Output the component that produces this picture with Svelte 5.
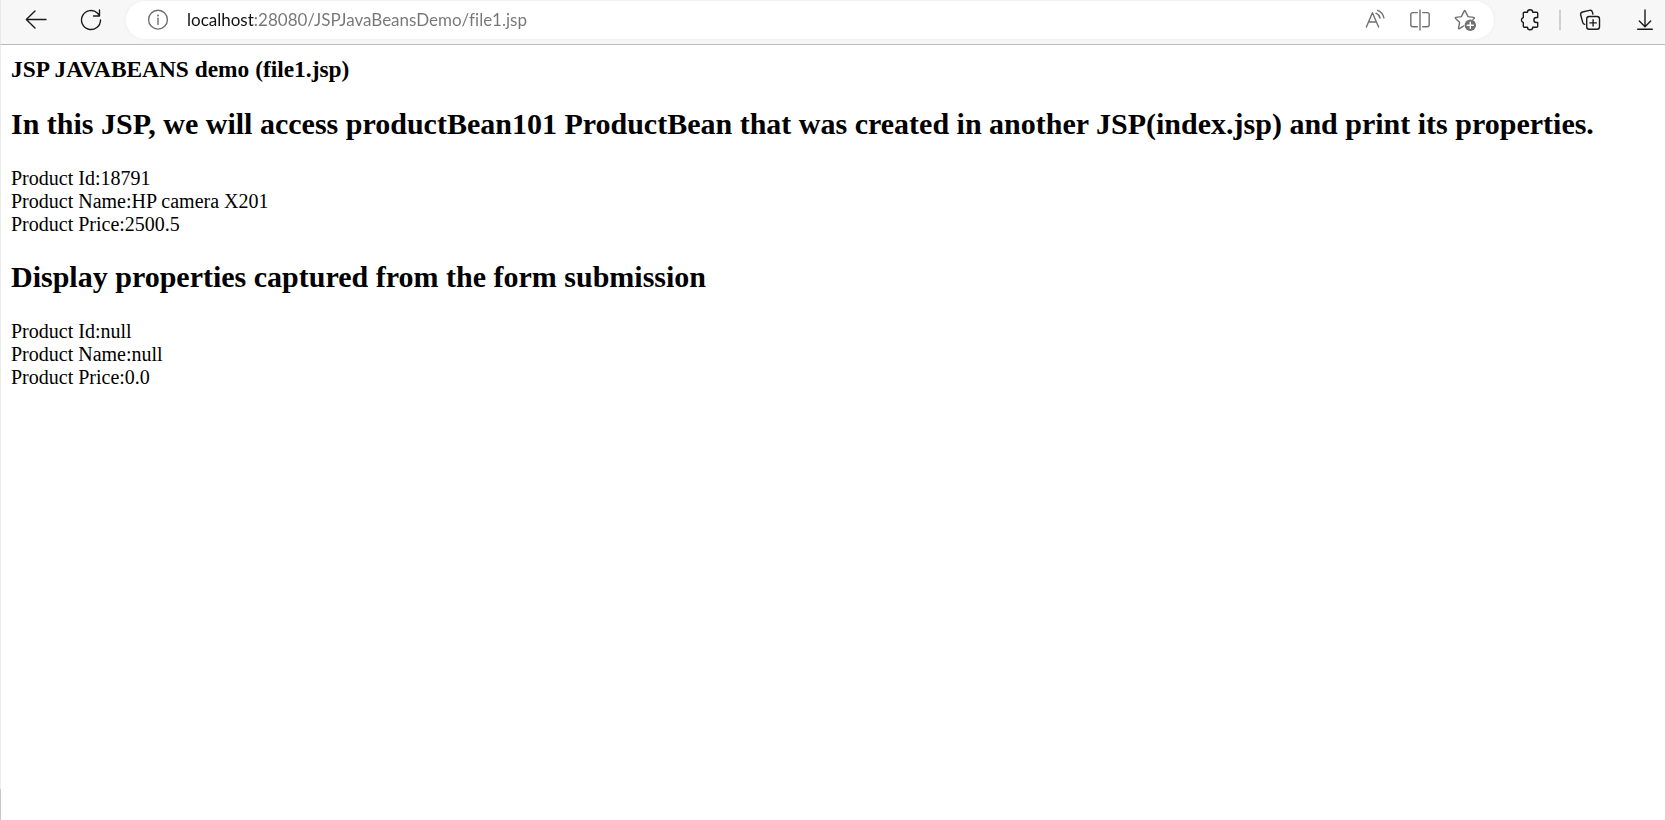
<script>
  let url = $state('localhost:28080/JSPJavaBeansDemo/file1.jsp');

  const created = [
    ['Product Id', '18791'],
    ['Product Name', 'HP camera X201'],
    ['Product Price', '2500.5']
  ];
  const submitted = [
    ['Product Id', 'null'],
    ['Product Name', 'null'],
    ['Product Price', '0.0']
  ];
</script>

{#snippet properties(rows)}
  <div class="properties">
    {#each rows as [name, value]}
      <div>{name}:{value}</div>
    {/each}
  </div>
{/snippet}

<div class="window">
  <header class="toolbar">
    <nav class="navigation">
      <button aria-label="Back">
        <svg viewBox="0 0 24 24"><path d="M22 11.5H2.5M11 3l-8.7 8.5L11 20" /></svg>
      </button>
      <button aria-label="Refresh">
        <svg viewBox="0 0 24 24"><path d="M21.5 12A9.5 9.5 0 1 1 18.6 5.2L20.5 7.5M20.5 2v6h-6" /></svg>
      </button>
    </nav>

    <div class="address">
      <button aria-label="View site information">
        <svg viewBox="0 0 24 24"><circle cx="12" cy="11.7" r="9.4" /><path d="M12 10.3v6.2" /><circle class="solid" cx="12" cy="7.4" r="1" /></svg>
      </button>
      <input type="text" aria-label="Address" spellcheck="false" bind:value={url} />
      <div class="actions">
        <button aria-label="Read aloud">
          <svg viewBox="0 0 24 24"><path d="M3.4 19 9.4 4.7 15.6 19M5.4 14h8M13 5.2q3 1.3 4 4.8M14.6 2.3q5.1 1.9 6.3 7.5" /></svg>
        </button>
        <button aria-label="Split screen">
          <svg viewBox="0 0 24 24"><path d="M12 2v20M9.3 4.6H4.8a2 2 0 0 0-2 2v10.2a2 2 0 0 0 2 2h4.5M14.7 4.6h4.5a2 2 0 0 1 2 2v10.2a2 2 0 0 1-2 2h-4.5" /></svg>
        </button>
        <button aria-label="Add this page to favorites">
          <svg viewBox="0 0 24 24"><path d="M10.5 18.1 6.4 20.6q-1 .5-.8-.7l1-5.6-4-3.8q-.8-.9.4-1.1l5.4-.8 2.7-5.5q.6-1.1 1.2 0L15 8.6l5.6.8q1.2.2.5 1l-1.1 1.1" /><circle class="solid" cx="17.3" cy="17.3" r="5.7" /><path class="plus" d="M17.3 14.3v6M14.3 17.3h6" /></svg>
        </button>
      </div>
    </div>

    <div class="tools">
      <button aria-label="Extensions">
        <svg viewBox="0 0 24 24"><path d="M6.3 5.3a1 1 0 0 1 1-1h3.2a2.6 2.6 0 0 1 5.2 0h4a1 1 0 0 1 1 1v4.2h-1.3a2.5 2.5 0 0 0 0 5h1.3v3.7a1 1 0 0 1-1 1h-4a2.6 2.6 0 0 1-5.2 0H7.3a1 1 0 0 1-1-1v-3.7a2.6 2.6 0 0 1 0-5z" /></svg>
      </button>
      <span class="divider"></span>
      <button aria-label="Collections">
        <svg viewBox="0 0 24 24"><rect x="8.7" y="8.5" width="12.8" height="12.8" rx="2.5" /><path d="M15.1 11.7v6.4M11.9 14.9h6.4M6.7 16.4q-1.5-.3-2-2L2.7 7q-.5-2.3 1.8-3l7-1.6q2.3-.5 2.9 1.7l.5 2" /></svg>
      </button>
      <button class="download" aria-label="Downloads">
        <svg viewBox="0 0 24 24"><path d="M12 2v16.5M6.3 13l5.7 5.7L17.7 13M4.7 21.3h14.6" /></svg>
      </button>
    </div>
  </header>

  <main>
    <h3>JSP JAVABEANS demo (file1.jsp)</h3>
    <h2>In this JSP, we will access productBean101 ProductBean that was created in another JSP(index.jsp) and print its properties.</h2>
    {@render properties(created)}
    <h2>Display properties captured from the form submission</h2>
    {@render properties(submitted)}
  </main>
  <div class="edge"></div>
</div>

<style>
  :global(body) {
    margin: 0;
    background: #fff;
  }

  .window {
    min-height: 100vh;
    display: flex;
    flex-direction: column;
  }

  .toolbar {
    box-sizing: border-box;
    display: flex;
    align-items: center;
    gap: 23px;
    padding: 1px 8px 5px 23px;
    background: #f7f7f7;
    border-left: 1px solid #e8e8e8;
    border-bottom: 1px solid #bababa;
  }

  .navigation {
    display: flex;
    gap: 31px;
  }

  button {
    display: block;
    flex: none;
    padding: 0;
    border: 0;
    background: none;
    color: #1b1b1b;
  }

  svg {
    display: block;
    width: 24px;
    height: 24px;
    fill: none;
    stroke: currentColor;
    stroke-width: 1.4;
    stroke-linecap: round;
    stroke-linejoin: round;
  }

  .solid {
    fill: currentColor;
    stroke: none;
  }

  .plus {
    stroke: #fff;
  }

  .address {
    box-sizing: border-box;
    flex: 1;
    min-width: 0;
    height: 38px;
    display: flex;
    align-items: center;
    padding: 0 17px 0 20px;
    border-radius: 19px;
    background: #fff;
    box-shadow: 0 0 4px #0000000d;
  }

  .address button {
    color: #707070;
  }

  input {
    flex: 1;
    min-width: 0;
    height: 30px;
    margin: 0 17px 2px;
    padding: 0;
    border: 0;
    outline: 0;
    color: #767676;
    font: 17px/24px "Segoe UI", Lato, sans-serif;
    font-variant-ligatures: none;
    /* The host name is darker than the port and path. */
    background: linear-gradient(90deg, #111 68px, #767676 68px);
    background-clip: text;
    -webkit-background-clip: text;
    -webkit-text-fill-color: transparent;
    caret-color: #111;
  }

  .actions {
    display: flex;
    gap: 21px;
  }

  .tools {
    display: flex;
    align-items: center;
    gap: 17px;
  }

  .divider {
    width: 2px;
    height: 20px;
    margin-left: 1px;
    background: #d0d0d0;
  }

  .download {
    margin-left: 14px;
  }

  main {
    flex: 1;
    padding: 10px;
    border-left: 1px solid #ececec;
    color: #000;
    font: 20px/23px "Liberation Serif", "Times New Roman", serif;
  }

  .edge {
    height: 31px;
    border-left: 1px solid #c8c8c8;
  }

  h2,
  h3 {
    margin: 0;
    font-weight: bold;
  }

  h3 {
    line-height: 28px;
  }

  h2 {
    margin: 24px 0 26px;
    font-size: 30px;
    line-height: 34px;
  }
</style>
